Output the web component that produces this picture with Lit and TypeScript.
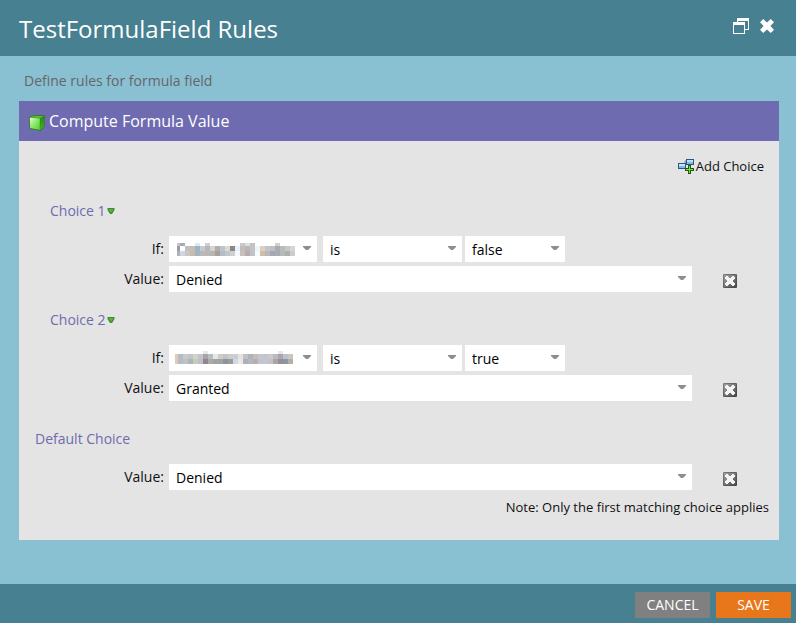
import { LitElement, html, svg, css, nothing } from "lit";
import { customElement, property, state } from "lit/decorators.js";

interface Mosaic {
  label: string;
  left: number;
  top: number;
  firstWidth: number;
  rows: string[];
}

interface Choice {
  id: string;
  title: string;
  mosaic?: Mosaic;
  test?: string;
  value: string;
}

const MOSAIC_1: Mosaic = {
  label: "Field (redacted)",
  left: 8,
  top: 7,
  firstWidth: 3,
  rows: [
    "c4c6cc a9abb3 fff fff dce8f2 fff cfcfcf fff fff fff fff fff fff c9c9c9 d9dfe4 c3c3c6 fff fff fff fff d2d2d2 fff fff fff",
    "9a9ca2 fdfdff c0c0c2 c8bdae 9fb2c6 c7c9cd b5b7ba d3d3cf b9aea6 bcc5cf dcdcd6 8b8789 e6f3fd c4bcb8 bdb6b4 c3c3c7 eaf6fd e2cfba c4c4c4 bebec6 a9adb2 bdbbb8 c5c8cc d5d5d5",
    "aeb2ba d2d5dc c7c7c9 c6bcac a5b4c4 b7b9bf bcb7b1 b5b5b5 a89f98 b4bcc4 bfc6cc d0d0d0 f3faff c8c0be b7adab c1c3c9 f4fafd d0bda9 b3b9bd a5a8b3 a7abb3 b6b9bb b2aea8 cccccc",
  ],
};

const MOSAIC_2: Mosaic = {
  label: "Field (redacted)",
  left: 6,
  top: 6,
  firstWidth: 3,
  rows: [
    "fff fff fff fff fff fff e8e8ea fff fff fff fff fff fff fff fff fff fff fff fff fff fff e8e8ea fff fff",
    "e0cbb8 b5bec6 c7cbcb bfc5c8 d0d3c8 c3c3c8 a9a3a7 b5bec5 e5e6e6 cacdca c1c5c9 cdcdc9 c5d0d9 e3e3e1 c0c0c6 a9b4bf c4bdb8 c4c7cd c2c5cb c9c9ce b9bbc1 a9a5aa bcc3c8 c7c6c2",
    "e0cbb8 b4bdc6 bec1c5 adb5b6 c4cbb8 bfbfcc 91868d b0a9a3 9da4a4 a0a5a4 8f949a 9f9b99 cfd9e2 ebe9e8 adb0b8 b3b8bf b9aeab c2c5cc c5c7cc c1c1c6 aba5a1 988f95 8b97a4 b5aea9",
  ],
};

const CHOICES: Choice[] = [
  { id: "c1", title: "Choice 1", mosaic: MOSAIC_1, test: "false", value: "Denied" },
  { id: "c2", title: "Choice 2", mosaic: MOSAIC_2, test: "true", value: "Granted" },
  { id: "default", title: "Default Choice", value: "Denied" },
];

const cubeIcon = html`<svg class="icon" width="16" height="20" viewBox="0 -4 16 20" aria-hidden="true">
  <defs>
    <linearGradient id="front" x1="0" y1="0" x2="1" y2="1">
      <stop offset="0" stop-color="#e2fad6" />
      <stop offset="0.5" stop-color="#8be868" />
      <stop offset="1" stop-color="#4fd02c" />
    </linearGradient>
    <linearGradient id="side" x1="0" y1="0" x2="0" y2="1">
      <stop offset="0" stop-color="#2a8a12" />
      <stop offset="1" stop-color="#43b824" />
    </linearGradient>
  </defs>
  <path d="M0 1.800 5 0 16 .6 15.400 12 11.400 16 .6 13.600Z" fill="#2a7a18" />
  <path d="M1 2 5.400 .8 15 1.200 11 3.200Z" fill="#4fc42f" />
  <path d="M.8 2.600 10.800 3.600v11.400L1.200 13Z" fill="url(#front)" />
  <path d="M11.200 3.600 15.400 1.600 14.800 11.600l-3.600 3.600Z" fill="url(#side)" />
</svg>`;

const addIcon = html`<svg class="icon" width="16" height="15" viewBox="0 0 16 15" aria-hidden="true">
  <path d="M7 7V2h2" fill="none" stroke="#7d8790" />
  <rect x="8.500" y=".5" width="7" height="5" fill="#79b9ee" stroke="#2f557c" />
  <path d="M9 1.500h6M9 2.500h6" stroke="#bfe0fa" />
  <rect x=".5" y="4.500" width="7" height="5" fill="#79b9ee" stroke="#2f557c" />
  <path d="M1 5.500h6M1 6.500h6" stroke="#c8e6fb" />
  <path d="M10 6h3v3h3v3h-3v3h-3v-3H7V9h3Z" fill="#1d5c0d" />
  <path d="M11 7h1v3h3v1h-3v3h-1v-3H8v-1h3Z" fill="#7fe04c" />
</svg>`;

const restoreIcon = html`<svg class="icon" width="16" height="16" viewBox="0 0 16 16" aria-hidden="true">
  <path d="M4 0h12v12h-4v-1h3V3H5v1H4Z" fill="#fff" />
  <path d="M0 4h12v12H0Zm1 3v8h10V7Z" fill="#fff" fill-rule="evenodd" />
</svg>`;

const closeIcon = html`<svg class="icon" width="14" height="14" viewBox="0 0 14 14" aria-hidden="true">
  <path d="M3.200 0 7 3.600 10.800 0 14 3.200 10.400 7 14 10.800 10.800 14 7 10.400 3.200 14 0 10.800 3.600 7 0 3.200Z" fill="#fff" />
</svg>`;

const removeIcon = html`<svg class="icon" width="14" height="14" viewBox="0 0 14 14" aria-hidden="true">
  <defs>
    <linearGradient id="tile" x1="0" y1="0" x2="1" y2="1">
      <stop offset="0" stop-color="#a4a4a4" />
      <stop offset="1" stop-color="#4c4c4c" />
    </linearGradient>
    <linearGradient id="rim" x1="0" y1="0" x2="1" y2="1">
      <stop offset="0" stop-color="#7c7c7c" />
      <stop offset="1" stop-color="#404040" />
    </linearGradient>
  </defs>
  <rect width="14" height="14" rx="1" fill="url(#rim)" />
  <rect x="1" y="1" width="12" height="12" fill="url(#tile)" />
  <path d="M3 2h2v1h1v1h2V3h1V2h2v1h1v2h-1v1h-1v2h1v1h1v2h-1v1H9v-1H8v-1H6v1H5v1H3v-1H2V9h1V8h1V6H3V5H2V3h1Z" fill="#f4f4f4" />
</svg>`;

const caret = html`<svg class="caret" width="8" height="4" viewBox="0 0 8 4" aria-hidden="true">
  <path d="M0 0h8v1L5 4H3L0 1Z" fill="#8e8e8e" />
</svg>`;

const greenArrow = html`<svg class="icon" width="8" height="6" viewBox="0 0 8 6" aria-hidden="true">
  <path d="M.5 0h7v2L5 6H3L.5 2Z" fill="#3f8a30" />
  <path d="M1.500 1h5L4 5Z" fill="#55b83a" />
</svg>`;

@customElement("rule-select")
export class RuleSelect extends LitElement {
  @property() label = "";
  @property() value = "";
  @property({ attribute: false }) options: string[] = [];
  @property({ attribute: false }) mosaic?: Mosaic;

  static styles = css`
    :host {
      display: block;
      position: relative;
      height: 26px;
    }
    .control {
      appearance: none;
      display: block;
      width: 100%;
      height: 26px;
      margin: 0;
      padding: 2px 20px 0 7px;
      border: 0;
      border-radius: 0;
      background: #fff;
      color: #000;
      font: 14px/24px "Open Sans", "Noto Sans", sans-serif;
    }
    .control:focus-visible {
      outline: 1px solid #6f6bb0;
    }
    .caret {
      position: absolute;
      right: 6px;
      top: 10px;
      pointer-events: none;
    }
    .mosaic {
      position: absolute;
      left: 0;
      top: 0;
      pointer-events: none;
    }
  `;

  private drawMosaic(m: Mosaic) {
    return html`<svg class="mosaic" width="130" height="26" viewBox="0 0 130 26" shape-rendering="crispEdges" aria-hidden="true">
      ${m.rows.map((row, r) =>
        row.split(" ").map((color, c) => {
          const x = c === 0 ? m.left : m.left + m.firstWidth + (c - 1) * 5;
          const y = r === 0 ? m.top : m.top + 3 + (r - 1) * 5;
          return svg`<rect x=${x} y=${y} width=${c === 0 ? m.firstWidth : 5} height=${r === 0 ? 3 : 5} fill=${"#" + color}></rect>`;
        }),
      )}
    </svg>`;
  }

  render() {
    return html`
      <select class="control" aria-label=${this.label}>
        ${this.options.map((o) => html`<option ?selected=${o === this.value}>${o}</option>`)}
      </select>
      ${this.mosaic ? this.drawMosaic(this.mosaic) : nothing} ${caret}
    `;
  }
}

@customElement("app-root")
export class AppRoot extends LitElement {
  @state() private choices = CHOICES;

  static styles = css`
    :host {
      display: flex;
      flex-direction: column;
      min-height: 100vh;
      background: #89c1d3;
      color: #111;
      font: 14px/20px "Open Sans", "Noto Sans", sans-serif;
    }
    .icon {
      display: block;
      flex: none;
    }
    .header {
      display: flex;
      align-items: center;
      justify-content: space-between;
      height: 56px;
      padding: 0 22px 4px 19px;
      box-sizing: border-box;
      background: #478090;
    }
    .title {
      margin: 0;
      padding-top: 6px;
      color: #fff;
      font-size: 24px;
      font-weight: 400;
      line-height: 32px;
    }
    .tools {
      display: flex;
      align-items: center;
      gap: 11px;
    }
    .plain {
      display: flex;
      align-items: center;
      margin: 0;
      padding: 0;
      border: 0;
      background: none;
      color: inherit;
      font: inherit;
      cursor: pointer;
    }
    .main {
      flex: 1;
      padding: 15px 17px 20px 19px;
    }
    .intro {
      margin: 0;
      padding: 0 5px 10px;
      color: #666;
    }
    .card {
      background: #e4e4e4;
    }
    .card-head {
      display: flex;
      align-items: center;
      gap: 4px;
      height: 40px;
      padding: 0 10px;
      background: #6f6bb0;
      color: #fff;
    }
    .card-title {
      margin: 0;
      font-size: 16px;
      font-weight: 400;
      line-height: 40px;
    }
    .card-body {
      padding: 15px 0 23px;
    }
    .toolbar {
      display: flex;
      justify-content: flex-end;
      padding: 0 15px 25px;
      font-size: 13px;
    }
    .toolbar .plain {
      gap: 2px;
      line-height: 20px;
    }
    .choice {
      display: flex;
      flex-direction: column;
      gap: 4px;
      padding-bottom: 18px;
    }
    .choice-title {
      margin: 0;
      padding: 0 31px 11px;
      color: #6f6bb0;
      font-size: 14px;
      font-weight: 400;
      line-height: 20px;
    }
    .choice-title .plain {
      gap: 1px;
    }
    .last {
      padding: 10px 0 7px;
    }
    .last .choice-title {
      padding-left: 16px;
    }
    .row {
      display: grid;
      grid-template-columns: 145px 1fr 87px;
      align-items: center;
    }
    .label {
      text-align: right;
    }
    .fields {
      display: flex;
      margin-left: 5px;
    }
    .field {
      width: 148px;
      margin-right: 6px;
    }
    .operator {
      width: 139px;
      margin-right: 3px;
    }
    .test {
      width: 100px;
    }
    .value {
      flex: 1;
    }
    .remove {
      justify-self: center;
      padding: 4px 12px 0 0;
    }
    .note {
      margin: 0;
      padding: 0 10px;
      font-size: 13px;
      text-align: right;
    }
    .footer {
      display: flex;
      justify-content: flex-end;
      gap: 6px;
      padding: 8px 5px 5px;
      background: #478090;
    }
    .button {
      width: 75px;
      height: 26px;
      padding: 0;
      border: 0;
      background: #808080;
      color: #fff;
      font: 14px/26px "Open Sans", "Noto Sans", sans-serif;
      cursor: pointer;
    }
    .primary {
      background: #e8761a;
    }
  `;

  private remove(id: string) {
    this.choices = this.choices.filter((c) => c.id !== id);
  }

  private renderChoice(c: Choice) {
    return html`<section class="choice ${c.test ? "" : "last"}">
      <h3 class="choice-title">
        ${c.test ? html`<button class="plain">${c.title}${greenArrow}</button>` : c.title}
      </h3>
      ${c.test
        ? html`<div class="row">
            <span class="label">If:</span>
            <div class="fields">
              <rule-select class="field" .label=${c.mosaic?.label ?? ""} .mosaic=${c.mosaic}></rule-select>
              <rule-select class="operator" .label=${"Operator"} .value=${"is"} .options=${["is", "is not"]}></rule-select>
              <rule-select class="test" .label=${"Test value"} .value=${c.test} .options=${["true", "false"]}></rule-select>
            </div>
          </div>`
        : nothing}
      <div class="row">
        <span class="label">Value:</span>
        <div class="fields">
          <rule-select class="value" .label=${"Value"} .value=${c.value} .options=${["Denied", "Granted"]}></rule-select>
        </div>
        <button class="plain remove" aria-label="Remove" @click=${() => this.remove(c.id)}>${removeIcon}</button>
      </div>
    </section>`;
  }

  render() {
    return html`
      <header class="header">
        <h1 class="title">TestFormulaField Rules</h1>
        <div class="tools">
          <button class="plain" aria-label="Restore">${restoreIcon}</button>
          <button class="plain" aria-label="Close">${closeIcon}</button>
        </div>
      </header>
      <main class="main">
        <p class="intro">Define rules for formula field</p>
        <div class="card">
          <div class="card-head">
            ${cubeIcon}
            <h2 class="card-title">Compute Formula Value</h2>
          </div>
          <div class="card-body">
            <div class="toolbar">
              <button class="plain">${addIcon}Add Choice</button>
            </div>
            ${this.choices.map((c) => this.renderChoice(c))}
            <p class="note">Note: Only the first matching choice applies</p>
          </div>
        </div>
      </main>
      <footer class="footer">
        <button class="button">CANCEL</button>
        <button class="button primary">SAVE</button>
      </footer>
    `;
  }
}
